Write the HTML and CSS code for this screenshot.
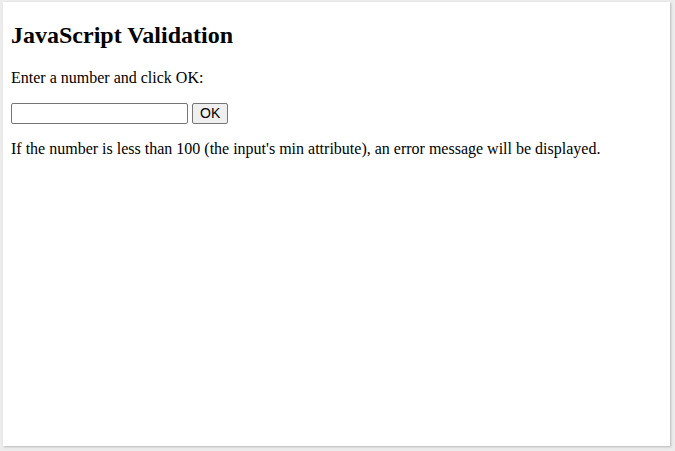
FILE: index.html
```html
<!DOCTYPE html>
<html>
<head>
<meta charset="utf-8">
<link rel="stylesheet" href="styles.css">
</head>
<body>
<div class="frame">
  <div class="page">
    <h2 class="title">JavaScript Validation</h2>
    <p class="text">Enter a number and click OK:</p>
    <div class="controls">
      <input class="num" type="text"><button class="ok">OK</button>
    </div>
    <p class="text">If the number is less than 100 (the input's min attribute), an error message will be displayed.</p>
  </div>
</div>
</body>
</html>
```
FILE: styles.css
```css
html, body {
  margin: 0;
  padding: 0;
  background: #ececec;
}
.frame {
  width: 675px;
  height: 451px;
  box-sizing: border-box;
  padding: 2px 5px 5px 3px;
}
.page {
  background: #ffffff;
  height: 444px;
  box-shadow: 1px 1px 2px rgba(0,0,0,0.22);
  padding: 0 8px;
  overflow: hidden;
  font-family: "Liberation Serif", "Times New Roman", serif;
  font-size: 16px;
  color: #000;
  display: flow-root;
}
.title {
  font-size: 24px;
  font-weight: bold;
  margin: 19.92px 0;
}
.text {
  margin: 16px 0;
}
.controls {
  display: flex;
  align-items: center;
  gap: 4px;
}
.num {
  width: 177px;
  height: 21px;
  box-sizing: border-box;
  border: 1px solid #767676;
  border-radius: 2px;
  padding: 1px 2px;
  margin: 0;
  font-family: "Liberation Sans", Arial, sans-serif;
  font-size: 13.333px;
  background: #fff;
}
.ok {
  height: 21px;
  box-sizing: border-box;
  border: 1px solid #767676;
  border-radius: 2px;
  background: #efefef;
  padding: 1px 7px;
  margin: 0;
  font-family: "Liberation Sans", Arial, sans-serif;
  font-size: 14px;
  color: #000;
}
```
